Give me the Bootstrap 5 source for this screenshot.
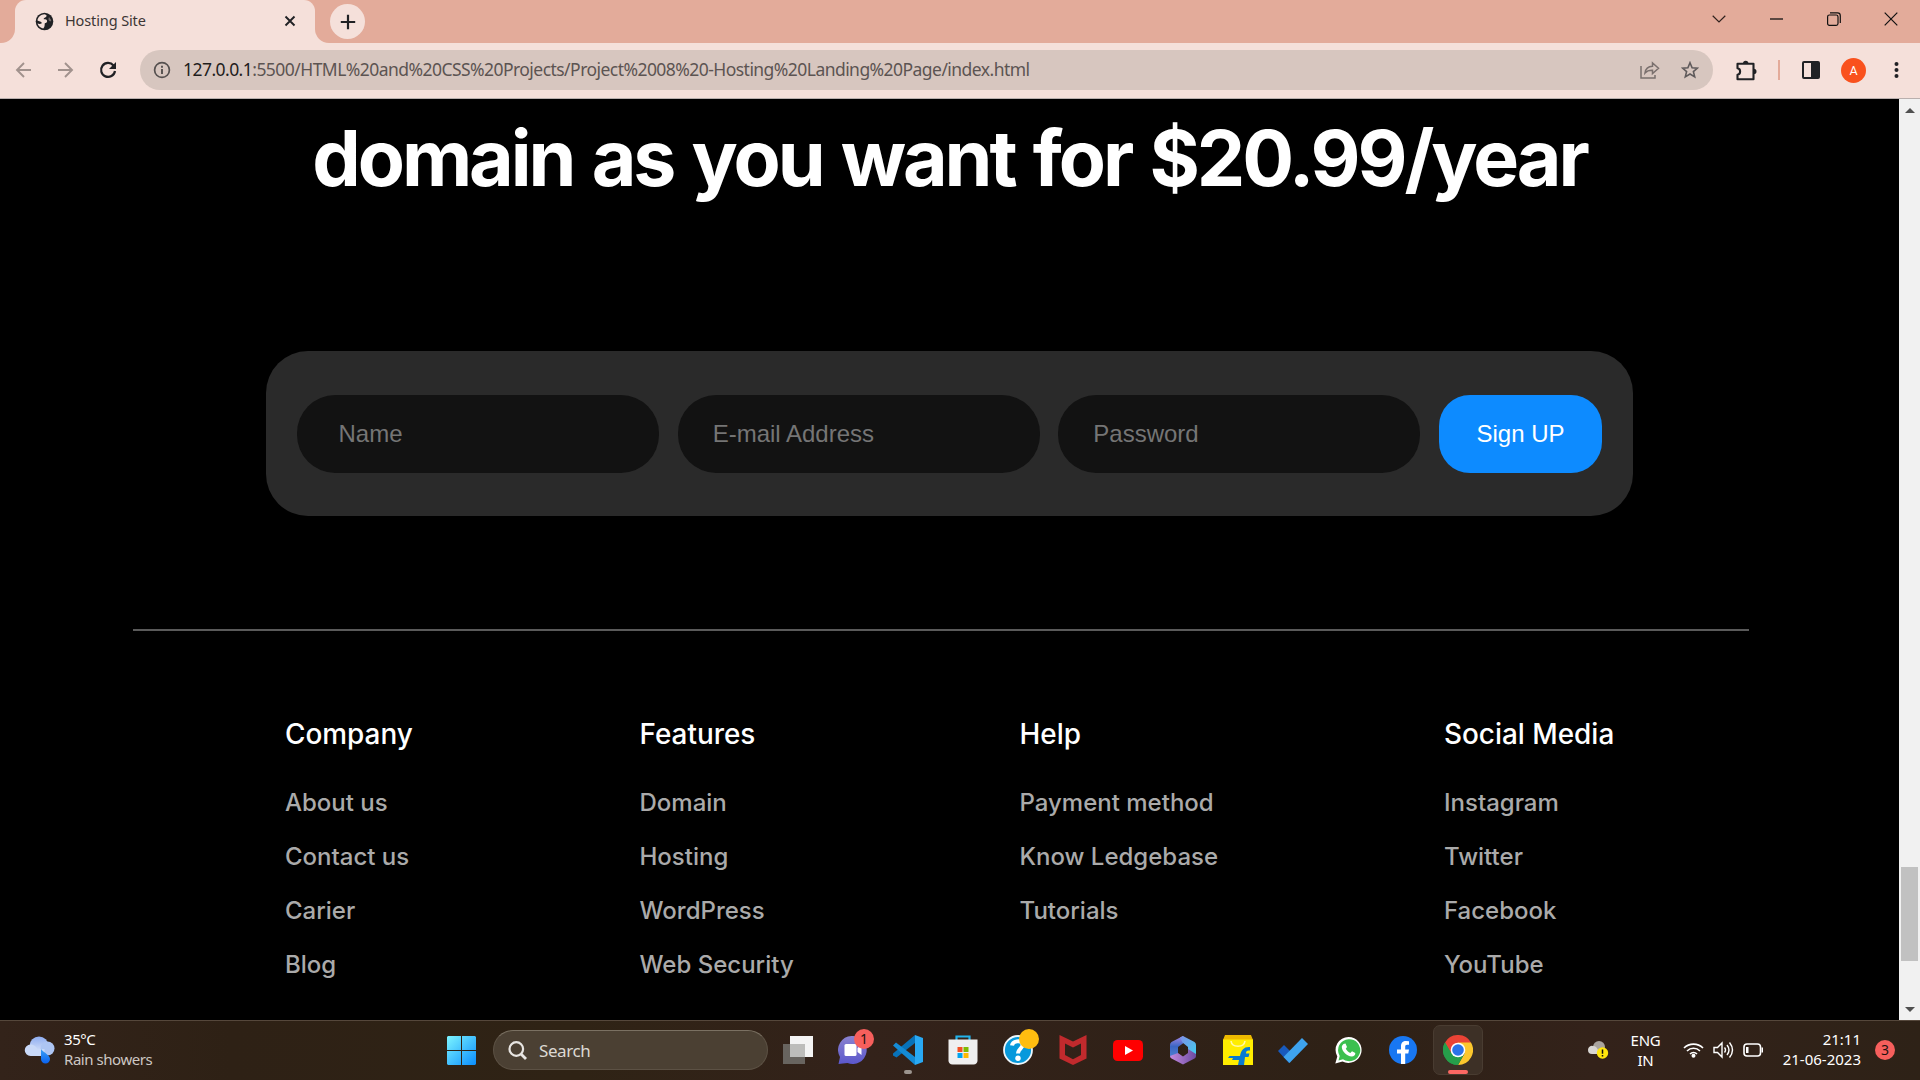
<!DOCTYPE html>
<html lang="en">
<head>
<meta charset="utf-8">
<title>Hosting Site</title>
<meta name="viewport" content="width=device-width, initial-scale=1">
<link href="https://cdn.jsdelivr.net/npm/bootstrap@5.3.0/dist/css/bootstrap.min.css" rel="stylesheet">
<style>
body{width:1920px;height:1080px;background:#000;font-family:"Noto Sans","Open Sans",sans-serif;line-height:1}
svg{display:block;flex:none}
.tabstrip{height:43px;background:#e3ab9a}
.tab-foot{width:15px;background:#f5e0da}
.tab-foot::before{content:"";display:block;height:100%;background:#e3ab9a;border-bottom-right-radius:14px}
.tab-foot.end-foot::before{border-radius:0 0 0 14px}
.tab-body{width:300px;background:#f5e0da;border-radius:11px 11px 0 0;padding:0 19px 1px 20px;height:43px}
.tab-title{font-size:14.5px;letter-spacing:-.12px;color:#3c3634;margin-left:11px;padding-bottom:2px}
.tab-plus{width:35px;height:35px;border-radius:50%;background:#f5e0da;margin-top:4px}
.win-ctl{width:57.5px}
.toolbar{height:56px;background:#f5e0da;border-bottom:1px solid #b9b0ae;padding-bottom:1px}
.nav-slot{width:140px;padding-right:1px}
.omni{width:1573px;height:40px;border-radius:20px;background:#d7c6bf;padding:0 14px 0 13px}
.url{font-size:17.5px;color:#5c5452;margin-left:12px;white-space:nowrap;letter-spacing:-.545px;padding-bottom:1px}
.url b{font-weight:400;color:#1f1d1d}
.avatar{width:25px;height:25px;border-radius:50%;background:#f9511d;color:#fff;font:12.5px Roboto,sans-serif}
.site{height:921px;font-family:Inter,sans-serif}
.scroller{width:21px;background:#f1f1f1;padding-top:9px;padding-bottom:8px}
.thumb{width:17px;height:94px;background:#c1c1c1;margin-top:754px}
.headline{font-size:77px;font-weight:700;line-height:94px;padding-top:12px;margin:0;color:#fff;white-space:nowrap;letter-spacing:-3.05px;word-spacing:3px}
.signup{width:1367px;height:165px;border-radius:42px;background:#2a2a2a;margin:146px 0 0 266px;padding:0 31px}
.signup .form-control{width:362px;height:78px;border:0;border-radius:38px;background:#121212;color:#fff;font:24px "Liberation Sans",sans-serif;padding:0 35px;box-shadow:none}
.signup .form-control.wide-pad{padding-left:41.5px}
.signup .form-control::placeholder{color:#757575;opacity:1}
.signup .btn{width:163px;height:78px;border:0;border-radius:31px;background:#0d8bff;color:#fff;font:24px "Liberation Sans",sans-serif}
.rule{width:1616px;height:2px;background:#5a5a5a;margin:113px 0 0 133px}
.foot{padding:83px 0 0 285px}
.foot h3{font-size:27.9px;font-weight:500;line-height:40px;margin:0 0 22px;color:#fff;white-space:nowrap}
.foot a{display:block;font-size:24px;font-weight:500;line-height:54px;color:#aaa;text-decoration:none;white-space:nowrap}
.foot ul{margin:0}
.c1{width:354.5px}.c2{width:380px}.c3{width:424.5px}
.taskbar{height:60px;background:linear-gradient(90deg,#33231a,#2e2115 12%,#2f2315 30%,#33221a 45%,#2e2116 70%,#33221a 83%,#2e2217);border-top:1px solid #55473b;color:#fff;padding-bottom:1px}
.weather{padding-left:24px;width:447px}
.w-text{font-size:15px;line-height:20px;margin-left:9px;white-space:nowrap;letter-spacing:-.45px;padding-bottom:3px}
.searchbox{width:275px;height:40px;border-radius:20px;background:#4b4033;border:1px solid #5c5144;border-top-color:#7a7062;margin:0 2.5px 0 17px;padding-left:14px;font-size:17px;color:#ddd9d4}
.app{width:55px;height:59px}
.app.active::before{content:"";position:absolute;left:2.5px;top:4px;width:50px;height:50px;border-radius:7px;background:#3d3026;border:1px solid #493c31}
.app svg{position:relative}
.badge-dot{position:absolute;width:20px;height:20px;border-radius:50%;left:28.5px;top:8px;background:#f65f5c;color:#1b1210;font-size:14px}
.badge-dot.gold{background:#ffbd10}
.mark-line{position:absolute;width:8px;height:4px;border-radius:2px;background:#9c948e;left:23.5px;bottom:6px}
.mark-line.hot{width:20px;left:17.5px;background:#fc6863}
.tray-text{font-size:15px;line-height:20px;letter-spacing:-.3px;white-space:nowrap;padding-bottom:3px}
.tray-text.clock{letter-spacing:0}
.count{width:20px;height:20px;border-radius:50%;background:#f65f5c;color:#1b1210;font-size:14px}
</style>
</head>
<body class="overflow-hidden">
<div class="tabstrip d-flex">
  <div class="tab-foot"></div>
  <div class="tab-body d-flex align-items-center">
    <svg width="19" height="19" viewBox="0 0 19 19"><circle cx="9.5" cy="9.5" r="8.8" fill="#202124"/><path d="M9.500 2.300c2 .3 2.800 1.500 1.500 2.600-1.200.8-2.500.8-2.300 2.300 1.800.1 3.600.2 3.400 2.100-.1 1.300-1.200 1.700-2.300 2-.3 1.800.2 3.500-1.600 5.300-2.800-.5-4.900-2.500-5.700-5 1.700.5 3 .6 4.300-.3-.2-2-3-1.700-4.400-3C3.300 4.800 6 2.500 9.500 2.300z" fill="#f5e0da"/><path d="M14 5l2.300 3.200-.8 1.300c-1.300-.3-2.200-1.500-2-2.700z" fill="#f5e0da" opacity=".4"/></svg>
    <span class="tab-title">Hosting Site</span>
    <svg class="ms-auto" width="12" height="12" viewBox="0 0 12 12"><path d="M1.500 1.500l9 9m0-9l-9 9" stroke="#202124" stroke-width="1.900"/></svg>
  </div>
  <div class="tab-foot end-foot"></div>
  <div class="tab-plus d-flex align-items-center justify-content-center"><svg width="16" height="16"><path d="M8 .8v14.400M.8 8h14.400" stroke="#202124" stroke-width="2.200"/></svg></div>
  <div class="d-flex ms-auto pe-0" style="height:37px">
    <div class="win-ctl d-flex align-items-center justify-content-center"><svg width="14" height="8"><path d="M.7.8L7 7 13.300.8" fill="none" stroke="#30211d" stroke-width="1.200"/></svg></div>
    <div class="win-ctl d-flex align-items-center justify-content-center"><svg width="13" height="2"><path d="M0 1h13" stroke="#111" stroke-width="1.300"/></svg></div>
    <div class="win-ctl d-flex align-items-center justify-content-center"><svg width="14" height="14" fill="none" stroke="#111" stroke-width="1.200"><rect x=".6" y="3" width="10.400" height="10.400" rx="1.800"/><path d="M3 .9h7.500a2.800 2.800 0 0 1 2.800 2.800V11"/></svg></div>
    <div class="win-ctl d-flex align-items-center justify-content-center"><svg width="14" height="14"><path d="M.7.7l12.600 12.600m0-12.600L.7 13.300" stroke="#111" stroke-width="1.200"/></svg></div>
  </div>
</div>
<div class="toolbar d-flex align-items-center">
  <div class="nav-slot d-flex justify-content-end">
    <svg width="124" height="18" viewBox="0 0 124 18" fill="none"><g stroke="#a1928d" stroke-width="1.900"><path d="M16 9H2M9 2L2 9l7 7M43 9h14M50 2l7 7-7 7"/></g><path d="M98.500 4.500A7 7 0 1 0 100 10" stroke="#202124" stroke-width="2.200"/><path d="M101 1v7h-7z" fill="#202124"/></svg>
  </div>
  <div class="omni d-flex align-items-center">
    <svg width="18" height="18" viewBox="0 0 18 18"><circle cx="9" cy="9" r="7.400" fill="none" stroke="#55504f" stroke-width="1.700"/><path d="M9 8v5M9 4.800v1.900" stroke="#55504f" stroke-width="1.900"/></svg>
    <div class="url"><b>127.0.0.1</b>:5500/HTML%20and%20CSS%20Projects/Project%2008%20-Hosting%20Landing%20Page/index.html</div>
    <svg class="ms-auto" width="20" height="18" viewBox="0 0 20 18" fill="none" stroke="#7a706e" stroke-width="1.500"><path d="M1 5v12h14v-3"/><path d="M5 12c.5-4 3-6.500 7.500-6.700V2l6 5.300-6 5.200V9.300C9 9.200 6.800 10 5 12z"/></svg>
    <svg style="margin-left:21px" width="18" height="18" viewBox="0 0 18 18"><path d="M9 1.700l2.100 5 5.400.4-4.100 3.500 1.300 5.300L9 13l-4.700 2.900 1.300-5.300-4.100-3.500 5.400-.4z" fill="none" stroke="#5f5a5b" stroke-width="1.600"/></svg>
  </div>
  <svg style="margin-left:22px" width="23" height="23" viewBox="0 0 23 23"><path d="M2.500 4.700h16v15.500h-16v-4.500c3.500-.5 3.500-6 0-6.500z" fill="none" stroke="#202124" stroke-width="2.100" stroke-linejoin="round"/><path d="M8 4.500a2.700 2.700 0 0 1 5.400 0zM18.800 9.700a2.700 2.700 0 0 1 0 5.400z" fill="#202124"/></svg>
  <div style="width:2px;height:20px;background:#e3ab9a;margin-left:20px"></div>
  <svg style="margin-left:22px" width="18" height="18"><rect x="1" y="1" width="16" height="16" rx="1" fill="none" stroke="#202124" stroke-width="2"/><path d="M9 1h8v16H9z" fill="#202124"/></svg>
  <div class="avatar d-flex align-items-center justify-content-center" style="margin-left:21px">A</div>
  <svg style="margin-left:28px" width="5" height="18" fill="#202124"><circle cx="2.500" cy="3" r="2"/><circle cx="2.500" cy="9" r="2"/><circle cx="2.500" cy="15" r="2"/></svg>
</div>
<div class="site d-flex">
  <main class="flex-grow-1">
    <h1 class="headline text-center">domain as you want for $20.99/year</h1>
    <form class="signup d-flex align-items-center justify-content-between">
      <input class="form-control wide-pad" placeholder="Name">
      <input class="form-control" placeholder="E-mail Address">
      <input class="form-control" placeholder="Password">
      <button class="btn p-0" type="button">Sign UP</button>
    </form>
    <div class="rule"></div>
    <footer class="foot d-flex">
      <div class="c1"><h3>Company</h3><ul class="list-unstyled"><li><a href="#">About us</a></li><li><a href="#">Contact us</a></li><li><a href="#">Carier</a></li><li><a href="#">Blog</a></li></ul></div>
      <div class="c2"><h3>Features</h3><ul class="list-unstyled"><li><a href="#">Domain</a></li><li><a href="#">Hosting</a></li><li><a href="#">WordPress</a></li><li><a href="#">Web Security</a></li></ul></div>
      <div class="c3"><h3>Help</h3><ul class="list-unstyled"><li><a href="#">Payment method</a></li><li><a href="#">Know Ledgebase</a></li><li><a href="#">Tutorials</a></li></ul></div>
      <div><h3>Social Media</h3><ul class="list-unstyled"><li><a href="#">Instagram</a></li><li><a href="#">Twitter</a></li><li><a href="#">Facebook</a></li><li><a href="#">YouTube</a></li></ul></div>
    </footer>
  </main>
  <div class="scroller d-flex flex-column align-items-center">
    <svg width="10" height="5"><path d="M5 0l5 5H0z" fill="#505050"/></svg>
    <div class="thumb"></div>
    <svg class="mt-auto" width="10" height="5"><path d="M0 0h10L5 5z" fill="#505050"/></svg>
  </div>
</div>
<div class="taskbar d-flex align-items-center">
  <div class="weather d-flex align-items-center">
    <svg width="31" height="28" viewBox="0 0 31 28"><defs><linearGradient id="cl" x2="0" y2="1"><stop stop-color="#8fadf0"/><stop offset="1" stop-color="#e3ecfb"/></linearGradient><linearGradient id="dr" x2="0" y2="1"><stop stop-color="#39a0f5"/><stop offset="1" stop-color="#0a62f0"/></linearGradient></defs><circle cx="15" cy="10" r="9.500" fill="url(#cl)"/><circle cx="23.500" cy="12.500" r="7" fill="#adc5f3"/><path d="M6.500 8.500c4 0 5.500 2.500 7 4.500h7v7h-14a5.700 5.700 0 0 1 0-11.500z" fill="#c9d9f8"/><path d="M17 13c3 4 9 6 9 10a4.500 4.500 0 0 1-9 0z" fill="url(#dr)"/></svg>
    <div class="w-text"><div>35°C</div><div style="color:#cdc7c3">Rain showers</div></div>
  </div>
  <svg width="29" height="29" viewBox="0 0 29 29"><defs><linearGradient id="wn" gradientUnits="userSpaceOnUse" x1="0" y1="0" x2="29" y2="29"><stop stop-color="#7df5ff"/><stop offset="1" stop-color="#0a8dfd"/></linearGradient></defs><path d="M1 0h13v14H0V1zM15 0h13l1 1v13H15zM0 15h14v14H1l-1-1zM15 15h14v13l-1 1H15z" fill="url(#wn)"/></svg>
  <div class="searchbox d-flex align-items-center">
    <svg width="19" height="19" viewBox="0 0 19 19" fill="none" stroke="#e8e5e2" stroke-width="2.200"><circle cx="8.300" cy="8" r="6.800"/><path d="M13 13l5 5" stroke-width="2.800"/></svg>
    <span style="margin-left:12px;letter-spacing:-.4px">Search</span>
  </div>
  <div class="app d-flex align-items-center justify-content-center"><svg width="30" height="28" viewBox="0 0 30 28"><path d="M0 8h22v20H0z" fill="#68645f"/><path d="M7 0h23v21H7z" fill="#f4f4f4"/><path d="M7 8h15v13H7z" fill="#bdbdbb"/></svg></div>
  <div class="app position-relative d-flex align-items-center justify-content-center"><svg width="30" height="28" viewBox="0 0 30 28"><defs><linearGradient id="ch" x2="0" y2="1"><stop stop-color="#8a82cf"/><stop offset="1" stop-color="#5b57cc"/></linearGradient></defs><path d="M14.500 0a14 14 0 1 1-5 27L.5 28l1.500-7A14 14 0 0 1 14.500 0z" fill="url(#ch)"/><rect x="6.500" y="8" width="12" height="12" rx="1.500" fill="#fff"/><path d="M19.500 12l4-3v10l-4-3z" fill="#fff"/></svg><span class="badge-dot d-flex align-items-center justify-content-center">1</span></div>
  <div class="app position-relative d-flex align-items-center justify-content-center"><svg width="30" height="30" viewBox="0 0 30 30"><path d="M22 0v8L3.500 22.500 0 20.500v-2z" fill="#0872b9"/><path d="M0 10.500L3 7.500l19 14.500v8z" fill="#148bd6"/><path d="M22 0l8 3v24l-8 3z" fill="#29a9f4"/></svg><span class="mark-line"></span></div>
  <div class="app d-flex align-items-center justify-content-center"><svg width="30" height="30" viewBox="0 0 30 30"><path d="M8.500 6V1.500h13V6" fill="none" stroke="#22b3ec" stroke-width="2.200"/><path d="M.5 4.500h29V25a4 4 0 0 1-4 4.500h-21A4 4 0 0 1 .5 25z" fill="#efefef"/><path d="M9.500 12h5v5h-5z" fill="#f25022"/><path d="M15.500 12h5v5h-5z" fill="#7fba00"/><path d="M9.500 18h5v5h-5z" fill="#00a4ef"/><path d="M15.500 18h5v5h-5z" fill="#ffb900"/></svg></div>
  <div class="app position-relative d-flex align-items-center justify-content-center"><svg width="30" height="30" viewBox="0 0 30 30"><circle cx="15" cy="15" r="14" fill="#0799dc" stroke="#eef6fb" stroke-width="1.800"/><path d="M9 10.500C9.500 6 18 4.500 19.500 9c1.200 4-4.500 4.500-4.500 9.500" fill="none" stroke="#fff" stroke-width="4"/><circle cx="15" cy="23.300" r="2.700" fill="#fff"/></svg><span class="badge-dot gold"></span></div>
  <div class="app d-flex align-items-center justify-content-center"><svg width="28" height="30" viewBox="0 0 28 30"><path fill-rule="evenodd" d="M.5 0L14 6.500 27.500 0v23.500L14 30 .5 23.500zM6 8.500V20l8 4.200 8-4.200V8.500l-8 4z" fill="#c12a2d"/></svg></div>
  <div class="app d-flex align-items-center justify-content-center"><svg width="30" height="21"><rect width="30" height="21" rx="4.500" fill="#f00"/><path d="M12 6l8 4.500-8 4.500z" fill="#fff"/></svg></div>
  <div class="app d-flex align-items-center justify-content-center"><svg width="28" height="30" viewBox="0 0 28 30"><defs><linearGradient id="m1" x2="1" y2="1"><stop stop-color="#7f8fe6"/><stop offset="1" stop-color="#3fd0f0"/></linearGradient><linearGradient id="m2" x2="0" y2="1"><stop stop-color="#a487e6"/><stop offset=".5" stop-color="#3b66c4"/><stop offset="1" stop-color="#4f7fd0"/></linearGradient><linearGradient id="m3" x2="1"><stop stop-color="#c58be0"/><stop offset="1" stop-color="#6a4aa0"/></linearGradient></defs><path d="M14 1L2.500 7Q1 8 1 10v11l8 1V12l7-5z" fill="url(#m2)"/><path d="M14 1l11.500 6Q27 8 27 10v11l-8-3v-6l-5.500-4.500L11 2.500z" fill="url(#m1)"/><path d="M1 21l8-3 5 3.500 5-3.500V14l8 5v2q0 1.500-1.500 2.500L14 29.500 2.500 23.500Q1 22.500 1 21z" fill="url(#m3)"/></svg></div>
  <div class="app d-flex align-items-center justify-content-center"><svg width="30" height="30" viewBox="0 0 30 30"><path d="M2 0h26l2 5H0z" fill="#edb900"/><path d="M0 4.500h30V30H0z" fill="#ffed00"/><path d="M8 6c1 7 13 7 14 0" fill="none" stroke="#fff8a6" stroke-width="1.600"/><path d="M27 12v3.500c-3-.5-4 .5-4 3h3.500l-1 3.500H22l-1 8h-6l1-5H9l1-2H5l1.500-2H17c1-6 4-9.500 10-9z" fill="#087bd1"/></svg></div>
  <div class="app d-flex align-items-center justify-content-center"><svg width="30" height="25" viewBox="0 0 30 25"><path d="M0 13l6-6 11 11-6 7z" fill="#185abd"/><path d="M24 0l6 6-18.500 19-6-6z" fill="#3ea3ee"/></svg></div>
  <div class="app d-flex align-items-center justify-content-center"><svg width="27" height="27" viewBox="0 0 27 27"><path d="M13.500 0a13 13 0 1 1-6 24.500L.3 26.500l2-7A13 13 0 0 1 13.500 0z" fill="#fff"/><path d="M13.500 2.200a11 11 0 1 1-5.500 20L3.500 23.500l1.200-4.500a11 11 0 0 1 8.800-16.800z" fill="#3cc04f"/><path d="M8.500 7l2-.5 1.500 3.500-1.200 1.700c1 2 2.500 3.200 4.500 4.200l1.700-1.700 3.300 1.700c.2 2-1.500 3.500-3.500 3.500-5 0-10-5.400-10-9.400 0-1 .7-2.200 1.700-3z" fill="#fff"/></svg></div>
  <div class="app d-flex align-items-center justify-content-center"><svg width="28" height="28" viewBox="0 0 28 28"><circle cx="14" cy="14" r="14" fill="#1877f2"/><path d="M12 28V17.500H8v-4h4v-3C12 6.500 14 5 17 5l3 .3v3.500h-1.800c-1.600 0-2 .8-2 2v2.700h3.800l-.7 4h-3.100V28z" fill="#fff"/></svg></div>
  <div class="app active position-relative d-flex align-items-center justify-content-center"><svg width="30" height="30" viewBox="0 0 30 30"><path d="M15 15L2 7.500a15 15 0 0 1 26 0z" fill="#ea4335"/><path d="M28 7.500A15 15 0 0 1 15 30l6.500-11.500L15 7.500z" fill="#fcc72d"/><path d="M2 7.500A15 15 0 0 0 15 30l6.500-11.500H15z" fill="#269e4a"/><path d="M2 7.500h26.100H15l-6.500 11z" fill="#ea4335"/><path d="M2 7.500l6.500 11.200 6.500 3.500V30A15 15 0 0 1 2 7.500z" fill="#269e4a"/><circle cx="15" cy="15" r="7.300" fill="#fff"/><circle cx="15" cy="15" r="5.800" fill="#2b73e8"/></svg><span class="mark-line hot"></span></div>
  <div class="d-flex align-items-center ms-auto" style="width:332px">
    <svg width="21" height="18" viewBox="0 0 21 18"><circle cx="11" cy="6" r="6" fill="#a9a49f"/><path d="M0 9a4 4 0 0 1 5-4c3 0 4 2 5 4v4H4a4 4 0 0 1-4-4z" fill="#d8d6d3"/><circle cx="14.500" cy="12" r="5.700" fill="#ffe60c"/><path d="M14.500 8.500v4.300m0 1.200v1.500" stroke="#111" stroke-width="1.500"/></svg>
    <div class="tray-text text-center" style="width:31px;margin-left:21px;padding-bottom:1px">ENG<br>IN</div>
    <svg style="margin-left:22px" width="21" height="16" viewBox="0 0 21 16" fill="none" stroke="#fff" stroke-width="1.600"><path d="M1 6a13.500 13.500 0 0 1 19 0M4 9a9.200 9.200 0 0 1 13 0M7 12a5 5 0 0 1 7 0"/><circle cx="10.500" cy="13.800" r="1.200" fill="#fff"/></svg>
    <svg style="margin-left:9px" width="21" height="18" viewBox="0 0 21 18" fill="none" stroke="#fff" stroke-width="1.400"><path d="M1 6.500h3.500L9 2v14l-4.500-4.500H1zM11.500 6.500q2 2.500 0 5M14 4q4 5 0 10M16.500 1.500q6 7.500 0 15"/></svg>
    <svg style="margin-left:9px" width="21" height="14" viewBox="0 0 21 14"><rect x="1" y="1" width="16.500" height="12" rx="3" fill="none" stroke="#fff" stroke-width="1.600"/><path d="M3 4h2.500v6H3zM18.500 4.500H20v5h-1.500z" fill="#fff"/></svg>
    <div class="tray-text clock text-end" style="width:79px;margin-left:18px">21:11<br>21-06-2023</div>
    <div class="count d-flex align-items-center justify-content-center" style="margin-left:14px">3</div>
  </div>
</div>
<script src="https://cdn.jsdelivr.net/npm/bootstrap@5.3.0/dist/js/bootstrap.bundle.min.js"></script>
</body>
</html>
